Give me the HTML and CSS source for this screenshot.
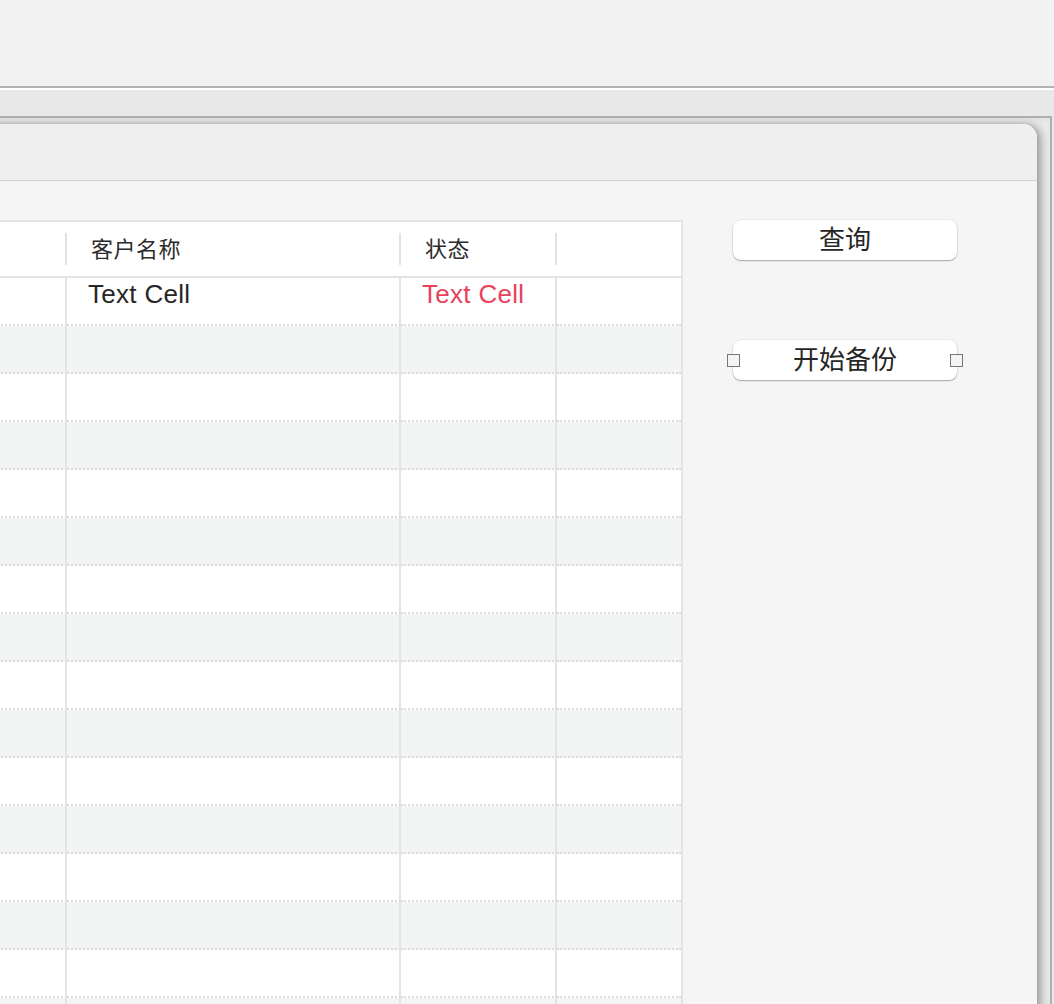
FILE: index.html
```html
<!DOCTYPE html>
<html lang="zh">
<head>
<meta charset="utf-8">
<title>备份</title>
<link rel="stylesheet" href="styles.css">
</head>
<body>
<div class="toolbar"></div>
<div class="tabstrip"></div>
<div class="canvas">
  <div class="window">
    <div class="titlebar"></div>
    <div class="content">
      <div class="table">
        <div class="thead">
          <div class="th c1"></div>
          <div class="th c2">客户名称</div>
          <div class="th c3">状态</div>
          <div class="th c4 last"></div>
        </div>
        <div class="row"><div class="td c1"></div><div class="td c2">Text Cell</div><div class="td c3 red">Text Cell</div><div class="td c4 last"></div></div>
        <div class="row"><div class="td c1"></div><div class="td c2"></div><div class="td c3"></div><div class="td c4 last"></div></div>
        <div class="row"><div class="td c1"></div><div class="td c2"></div><div class="td c3"></div><div class="td c4 last"></div></div>
        <div class="row"><div class="td c1"></div><div class="td c2"></div><div class="td c3"></div><div class="td c4 last"></div></div>
        <div class="row"><div class="td c1"></div><div class="td c2"></div><div class="td c3"></div><div class="td c4 last"></div></div>
        <div class="row"><div class="td c1"></div><div class="td c2"></div><div class="td c3"></div><div class="td c4 last"></div></div>
        <div class="row"><div class="td c1"></div><div class="td c2"></div><div class="td c3"></div><div class="td c4 last"></div></div>
        <div class="row"><div class="td c1"></div><div class="td c2"></div><div class="td c3"></div><div class="td c4 last"></div></div>
        <div class="row"><div class="td c1"></div><div class="td c2"></div><div class="td c3"></div><div class="td c4 last"></div></div>
        <div class="row"><div class="td c1"></div><div class="td c2"></div><div class="td c3"></div><div class="td c4 last"></div></div>
        <div class="row"><div class="td c1"></div><div class="td c2"></div><div class="td c3"></div><div class="td c4 last"></div></div>
        <div class="row"><div class="td c1"></div><div class="td c2"></div><div class="td c3"></div><div class="td c4 last"></div></div>
        <div class="row"><div class="td c1"></div><div class="td c2"></div><div class="td c3"></div><div class="td c4 last"></div></div>
        <div class="row"><div class="td c1"></div><div class="td c2"></div><div class="td c3"></div><div class="td c4 last"></div></div>
        <div class="row"><div class="td c1"></div><div class="td c2"></div><div class="td c3"></div><div class="td c4 last"></div></div>
        <div class="row"><div class="td c1"></div><div class="td c2"></div><div class="td c3"></div><div class="td c4 last"></div></div>
      </div>
      <div class="side">
        <button class="btn">查询</button>
        <button class="btn selected">开始备份<span class="handle left"></span><span class="handle right"></span></button>
      </div>
    </div>
  </div>
</div>
</body>
</html>
```
FILE: styles.css
```css
html, body {
  margin: 0;
  padding: 0;
}
body {
  width: 1054px;
  height: 1004px;
  overflow: hidden;
  background: #e8e8e8;
  font-family: "Liberation Sans", "Noto Sans CJK SC", sans-serif;
  color: #262626;
}
.toolbar {
  height: 86px;
  background: #f2f2f2;
  border-bottom: 2px solid #b3b3b3;
}
.tabstrip {
  height: 26px;
  background: #e8e8e8;
  border-top: 2px solid #ffffff;
}
.canvas {
  margin-left: -410px;
  margin-right: 2px;
  padding: 6px 13px 0 10px;
  border-top: 2px solid #b0b0b0;
  border-right: 2px solid #b0b0b0;
  background: linear-gradient(#e2e2e2, #e9e9e9 6px, #e9e9e9);
  height: 900px;
}
.window {
  background: #f4f4f4;
  border-radius: 0 14px 0 0;
  box-shadow: 4px 1px 9px rgba(0, 0, 0, 0.32), 0 -1px 3px rgba(0, 0, 0, 0.08);
  height: 900px;
}
.titlebar {
  height: 56px;
  background: #efefef;
  border-radius: 0 14px 0 0;
  border-bottom: 1.5px solid #d2d2d2;
}
.content {
  display: flex;
  align-items: flex-start;
  padding: 39px 0 0 20px;
  background: #f5f5f5;
}
.table {
  display: flex;
  flex-direction: column;
  border-top: 2px solid #e4e4e4;
  border-right: 2px solid #e4e4e4;
  background: #ffffff;
}
.c1 { width: 447px; }
.c2 { width: 334px; }
.c3 { width: 156px; }
.c4 { width: 124px; }
.thead {
  display: flex;
  align-items: center;
  height: 56px;
  box-sizing: border-box;
  border-bottom: 2px solid #e4e4e4;
  background: #ffffff;
}
.th {
  box-sizing: border-box;
  height: 32px;
  padding-top: 2px;
  line-height: 30px;
  padding-left: 24px;
  font-size: 22px;
  letter-spacing: 0.5px;
  color: #2b2b2b;
  border-right: 2px solid #e2e2e2;
}
.th.last,
.td.last {
  border-right: none;
}
.row {
  display: flex;
  height: 48px;
  background: #ffffff;
}
.row:nth-child(odd) {
  background: #f3f4f4;
}
.td {
  box-sizing: border-box;
  height: 48px;
  padding-left: 21px;
  padding-top: 1px;
  font-size: 26px;
  letter-spacing: 0.3px;
  line-height: 30px;
  border-right: 2px solid #e4e4e4;
  border-bottom: 2px dotted #dcdcdc;
  white-space: nowrap;
}
.td.red {
  color: #e9425b;
}
.side {
  display: flex;
  flex-direction: column;
  padding-left: 50px;
}
.btn {
  position: relative;
  width: 224px;
  height: 40px;
  margin: 0;
  padding: 0;
  border: none;
  border-radius: 8px;
  background: #ffffff;
  box-shadow: 0 1px 1.5px rgba(0, 0, 0, 0.3), 0 0 0 0.5px rgba(0, 0, 0, 0.08);
  font-family: "Liberation Sans", "Noto Sans CJK SC", sans-serif;
  font-size: 26px;
  line-height: 40px;
  color: #262626;
  text-align: center;
}
.btn.selected {
  margin-top: 80px;
}
.handle {
  position: absolute;
  top: 14px;
  width: 13px;
  height: 13px;
  box-sizing: border-box;
  border: 1.5px solid #777777;
  background: #f4f4f4;
}
.handle.left { left: -6px; }
.handle.right { right: -6px; }
```
